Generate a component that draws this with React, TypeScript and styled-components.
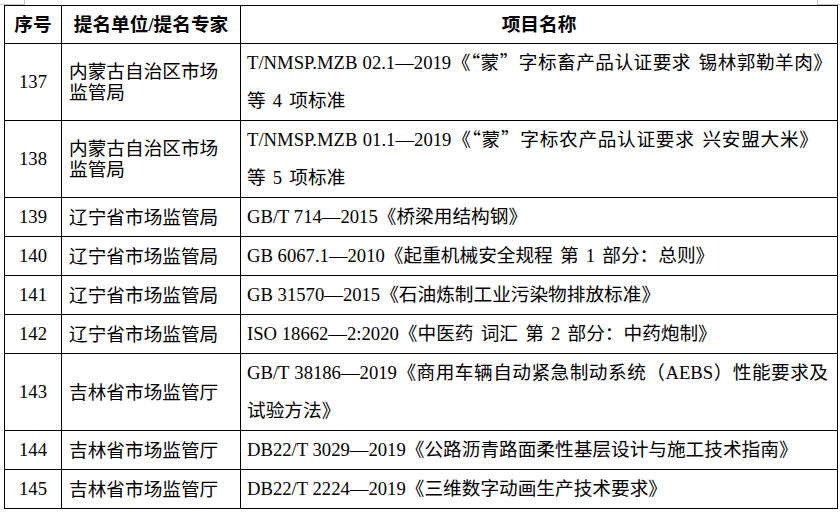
import React from "react";
import styled, { createGlobalStyle } from "styled-components";

const GlobalStyle = createGlobalStyle`
  html, body {
    margin: 0;
    padding: 0;
    background: #fff;
  }
  body {
    font-family: "Liberation Serif", "Noto Sans CJK SC", serif;
    color: #000;
  }
`;

const Page = styled.div`
  position: relative;
  width: 840px;
  height: 512px;
  padding: 5px 0 0 4px;
  box-sizing: border-box;
  overflow: hidden;
  background: #fff;

  /* corner marks of the document page */
  &::before,
  &::after {
    content: "";
    position: absolute;
    top: 0;
    height: 4px;
    border-bottom: 1px solid #c6c6c6;
  }
  &::before {
    left: 0;
    width: 24px;
    border-right: 1px solid #c6c6c6;
  }
  &::after {
    left: 817px;
    width: 23px;
    border-left: 1px solid #c6c6c6;
  }
`;

const Sheet = styled.table`
  border-collapse: collapse;
  table-layout: fixed;
  width: 833px;
  font-size: 18.67px;
`;

const HeadCell = styled.th`
  border: 1px solid #000;
  height: 37px;
  padding: 0;
  font-weight: 700;
  text-align: center;
  vertical-align: middle;
  line-height: 37px;
`;

const NumCell = styled.td`
  border: 1px solid #000;
  padding: 0;
  text-align: center;
  vertical-align: middle;
  line-height: 38px;
`;

const UnitCell = styled.td`
  border: 1px solid #000;
  padding: 0 7px;
  text-align: left;
  vertical-align: middle;
  line-height: 20px;
`;

const TitleCell = styled.td`
  border: 1px solid #000;
  padding: 0 5px 0 6px;
  vertical-align: middle;
  line-height: 38px;
`;

const Line = styled.div<{ $justify?: boolean; $end?: number }>`
  height: 38px;
  padding-right: ${(p) => p.$end ?? 0}px;
  text-align: ${(p) => (p.$justify ? "justify" : "left")};
  text-align-last: ${(p) => (p.$justify ? "justify" : "auto")};
`;

const Cjk = styled.span`
  font-family: "Noto Sans CJK SC", sans-serif;
  line-height: 1;
  word-spacing: 3px;
`;

const isCjk = (ch: string) =>
  /[\u2e80-\u9fff\uff00-\uffef\u3000-\u303f\u201c\u201d]/.test(ch);

// latin runs stay in the serif font, han runs (and the spaces next to them) go to the CJK face
const Mixed = ({ text }: { text: string }) => {
  const chars = Array.from(text);
  const kinds = chars.map((c, i) => {
    if (c === " ") {
      return isCjk(chars[i - 1] ?? "") || isCjk(chars[i + 1] ?? "") ? "c" : "l";
    }
    return isCjk(c) ? "c" : "l";
  });
  const runs: { kind: string; text: string }[] = [];
  chars.forEach((c, i) => {
    const last = runs[runs.length - 1];
    if (last && last.kind === kinds[i]) last.text += c;
    else runs.push({ kind: kinds[i], text: c });
  });
  return (
    <>
      {runs.map((r, i) =>
        r.kind === "c" ? <Cjk key={i}>{r.text}</Cjk> : <span key={i}>{r.text}</span>
      )}
    </>
  );
};

type Row = {
  no: string;
  unit: string;
  lines: string[];
  end?: number;
};

const rows: Row[] = [
  {
    no: "137",
    unit: "内蒙古自治区市场监管局",
    lines: ["T/NMSP.MZB 02.1—2019《“蒙”字标畜产品认证要求 锡林郭勒羊肉》", "等 4 项标准"],
  },
  {
    no: "138",
    unit: "内蒙古自治区市场监管局",
    lines: ["T/NMSP.MZB 01.1—2019《“蒙”字标农产品认证要求 兴安盟大米》", "等 5 项标准"],
    end: 14,
  },
  { no: "139", unit: "辽宁省市场监管局", lines: ["GB/T 714—2015《桥梁用结构钢》"] },
  { no: "140", unit: "辽宁省市场监管局", lines: ["GB 6067.1—2010《起重机械安全规程 第 1 部分：总则》"] },
  { no: "141", unit: "辽宁省市场监管局", lines: ["GB 31570—2015《石油炼制工业污染物排放标准》"] },
  { no: "142", unit: "辽宁省市场监管局", lines: ["ISO 18662—2:2020《中医药 词汇 第 2 部分：中药炮制》"] },
  {
    no: "143",
    unit: "吉林省市场监管厅",
    lines: ["GB/T 38186—2019《商用车辆自动紧急制动系统（AEBS）性能要求及", "试验方法》"],
    end: 4,
  },
  { no: "144", unit: "吉林省市场监管厅", lines: ["DB22/T 3029—2019《公路沥青路面柔性基层设计与施工技术指南》"] },
  { no: "145", unit: "吉林省市场监管厅", lines: ["DB22/T 2224—2019《三维数字动画生产技术要求》"] },
];

const App = () => {
  return (
    <Page>
      <GlobalStyle />
      <Sheet>
        <colgroup>
          <col style={{ width: 57 }} />
          <col style={{ width: 179 }} />
          <col style={{ width: 597 }} />
        </colgroup>
        <thead>
          <tr>
            <HeadCell><Mixed text="序号" /></HeadCell>
            <HeadCell><Mixed text="提名单位/提名专家" /></HeadCell>
            <HeadCell><Mixed text="项目名称" /></HeadCell>
          </tr>
        </thead>
        <tbody>
          {rows.map((row) => (
            <tr key={row.no}>
              <NumCell>{row.no}</NumCell>
              <UnitCell><Mixed text={row.unit} /></UnitCell>
              <TitleCell>
                {row.lines.map((line, i) => {
                  const wraps = i < row.lines.length - 1;
                  return (
                    <Line key={i} $justify={wraps} $end={wraps ? row.end : 0}>
                      <Mixed text={line} />
                    </Line>
                  );
                })}
              </TitleCell>
            </tr>
          ))}
        </tbody>
      </Sheet>
    </Page>
  );
};

export default App;
